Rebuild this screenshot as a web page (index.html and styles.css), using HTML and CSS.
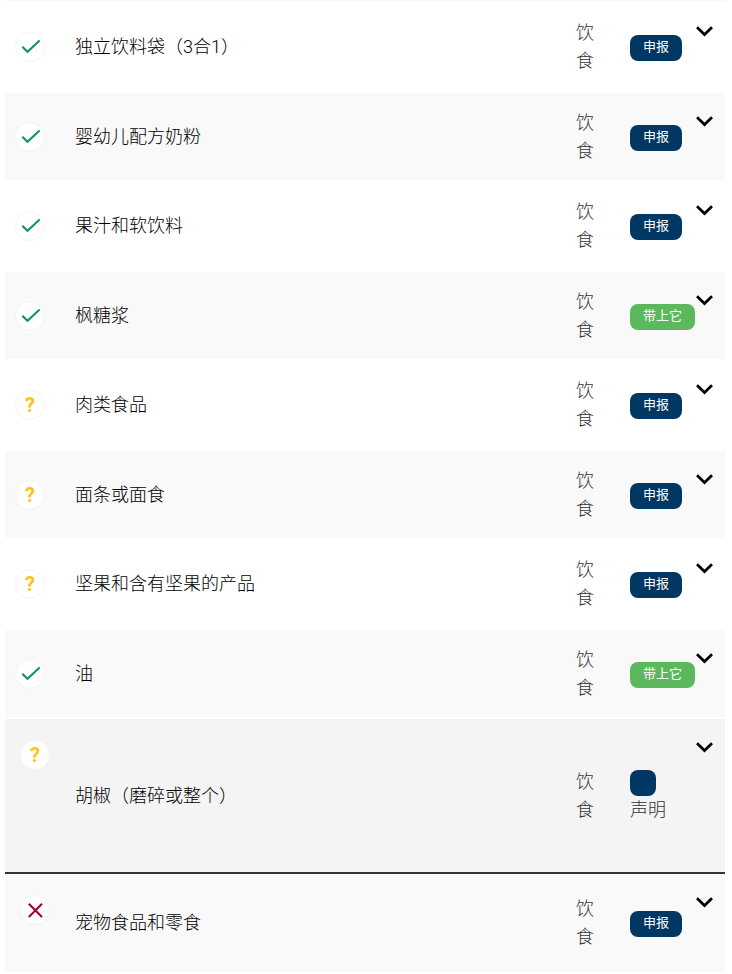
FILE: index.html
```html
<!DOCTYPE html>
<html lang="zh-CN">
<head>
  <meta charset="UTF-8">
  <meta name="viewport" content="width=device-width, initial-scale=1.0">
  <title>物品清单</title>
  <link rel="stylesheet" href="styles.css">
</head>
<body>
  <svg width="0" height="0" class="sprite" aria-hidden="true">
    <symbol id="check" viewBox="0 0 20 16"><path d="M2.3 7.7 L7.5 12.7 L19.6 1.4" fill="none" stroke="currentColor" stroke-width="2.1"/></symbol>
    <symbol id="cross" viewBox="0 0 20 16"><path d="M3.8 1.8 L17 15 M17 1.8 L3.8 15" fill="none" stroke="currentColor" stroke-width="2.1"/></symbol>
    <symbol id="chevron" viewBox="0 0 18 12"><path d="M2 2.2 L9.5 9.5 L17 2.2" fill="none" stroke="currentColor" stroke-width="2.7"/></symbol>
  </svg>
  <main>
    <table class="items">
      <colgroup>
        <col class="col-icon">
        <col>
        <col class="col-category">
        <col class="col-status">
        <col class="col-toggle">
      </colgroup>
      <tbody>
        <tr>
          <td class="icon"><span class="circle yes"><svg><use href="#check"/></svg></span></td>
          <td class="name">独立饮料袋（3合1）</td>
          <td class="category">饮食</td>
          <td class="status"><span class="badge declare">申报</span></td>
          <td class="toggle"><button type="button" aria-label="展开"><svg><use href="#chevron"/></svg></button></td>
        </tr>
        <tr>
          <td class="icon"><span class="circle yes"><svg><use href="#check"/></svg></span></td>
          <td class="name">婴幼儿配方奶粉</td>
          <td class="category">饮食</td>
          <td class="status"><span class="badge declare">申报</span></td>
          <td class="toggle"><button type="button" aria-label="展开"><svg><use href="#chevron"/></svg></button></td>
        </tr>
        <tr>
          <td class="icon"><span class="circle yes"><svg><use href="#check"/></svg></span></td>
          <td class="name">果汁和软饮料</td>
          <td class="category">饮食</td>
          <td class="status"><span class="badge declare">申报</span></td>
          <td class="toggle"><button type="button" aria-label="展开"><svg><use href="#chevron"/></svg></button></td>
        </tr>
        <tr>
          <td class="icon"><span class="circle yes"><svg><use href="#check"/></svg></span></td>
          <td class="name">枫糖浆</td>
          <td class="category">饮食</td>
          <td class="status"><span class="badge bring">带上它</span></td>
          <td class="toggle"><button type="button" aria-label="展开"><svg><use href="#chevron"/></svg></button></td>
        </tr>
        <tr>
          <td class="icon"><span class="circle maybe">?</span></td>
          <td class="name">肉类食品</td>
          <td class="category">饮食</td>
          <td class="status"><span class="badge declare">申报</span></td>
          <td class="toggle"><button type="button" aria-label="展开"><svg><use href="#chevron"/></svg></button></td>
        </tr>
        <tr>
          <td class="icon"><span class="circle maybe">?</span></td>
          <td class="name">面条或面食</td>
          <td class="category">饮食</td>
          <td class="status"><span class="badge declare">申报</span></td>
          <td class="toggle"><button type="button" aria-label="展开"><svg><use href="#chevron"/></svg></button></td>
        </tr>
        <tr>
          <td class="icon"><span class="circle maybe">?</span></td>
          <td class="name">坚果和含有坚果的产品</td>
          <td class="category">饮食</td>
          <td class="status"><span class="badge declare">申报</span></td>
          <td class="toggle"><button type="button" aria-label="展开"><svg><use href="#chevron"/></svg></button></td>
        </tr>
        <tr>
          <td class="icon"><span class="circle yes"><svg><use href="#check"/></svg></span></td>
          <td class="name">油</td>
          <td class="category">饮食</td>
          <td class="status"><span class="badge bring">带上它</span></td>
          <td class="toggle"><button type="button" aria-label="展开"><svg><use href="#chevron"/></svg></button></td>
        </tr>
        <tr class="active">
          <td class="icon"><span class="circle maybe">?</span></td>
          <td class="name">胡椒（磨碎或整个）</td>
          <td class="category">饮食</td>
          <td class="status"><span class="badge declare"></span><br>声明</td>
          <td class="toggle"><button type="button" aria-label="展开"><svg><use href="#chevron"/></svg></button></td>
        </tr>
        <tr class="last">
          <td class="icon"><span class="circle no"><svg><use href="#cross"/></svg></span></td>
          <td class="name">宠物食品和零食</td>
          <td class="category">饮食</td>
          <td class="status"><span class="badge declare">申报</span></td>
          <td class="toggle"><button type="button" aria-label="展开"><svg><use href="#chevron"/></svg></button></td>
        </tr>
      </tbody>
    </table>
  </main>
</body>
</html>
```
FILE: styles.css
```css
body {
  margin: 0;
  background: #fff;
  color: #333;
  font-family: Roboto, "Noto Sans CJK SC", sans-serif;
  font-size: 18px;
  font-weight: 300;
  line-height: 28px;
}

main {
  padding: 0 7px 0 5px;
}

.sprite {
  display: block;
}

.items {
  width: 100%;
  table-layout: fixed;
  border-spacing: 0;
  border-top: 1px solid #f5f5f5;
}

.col-icon { width: 70px; }
.col-category { width: 54px; }
.col-status { width: 65px; }
.col-toggle { width: 30px; }

td {
  box-sizing: border-box;
  height: 92px;
  padding: 0;
  vertical-align: middle;
}

/* striped rows */
tr:nth-child(even) td {
  height: 87px;
  background: #f9f9f9;
}

.icon {
  padding-left: 10px;
}

.name {
  color: #000;
}

.category {
  padding-right: 34px;
}

.circle {
  display: flex;
  box-sizing: border-box;
  width: 30px;
  height: 30px;
  align-items: center;
  justify-content: center;
  border: 1px solid #f4f4f4;
  border-radius: 50%;
  background: #fff;
}

.circle svg {
  width: 20px;
  height: 16px;
}

.yes { color: #0b9468; }
.no { color: #a6002b; }

.maybe {
  color: #ffc20e;
  font-size: 20px;
  font-weight: 700;
}

.status {
  white-space: nowrap;
}

.badge {
  display: inline-block;
  box-sizing: border-box;
  min-width: 26px;
  height: 26px;
  padding: 0 13px;
  border-radius: 8px;
  color: #fff;
  font-size: 13px;
  font-weight: 400;
  line-height: 24px;
  vertical-align: middle;
}

.declare {
  background: #003763;
}

.bring {
  background: #5cb85c;
}

td.toggle {
  padding-top: 24px;
  vertical-align: top;
}

tr:nth-child(even) td.toggle,
tr.active td.toggle {
  padding-top: 22px;
}

.toggle button {
  display: block;
  padding: 0;
  border: 0;
  background: none;
  color: #000;
  cursor: pointer;
}

.toggle svg {
  display: block;
  width: 18px;
  height: 12px;
}

tr.active td {
  height: 157px;
  border-top: 2px solid #fff;
  border-bottom: 2px solid #333;
  background: #f4f4f4;
}

tr.last td {
  height: 98px;
}

tr.active td.icon,
tr.last td.icon {
  padding: 21px 0 0 15px;
  vertical-align: top;
}
```
